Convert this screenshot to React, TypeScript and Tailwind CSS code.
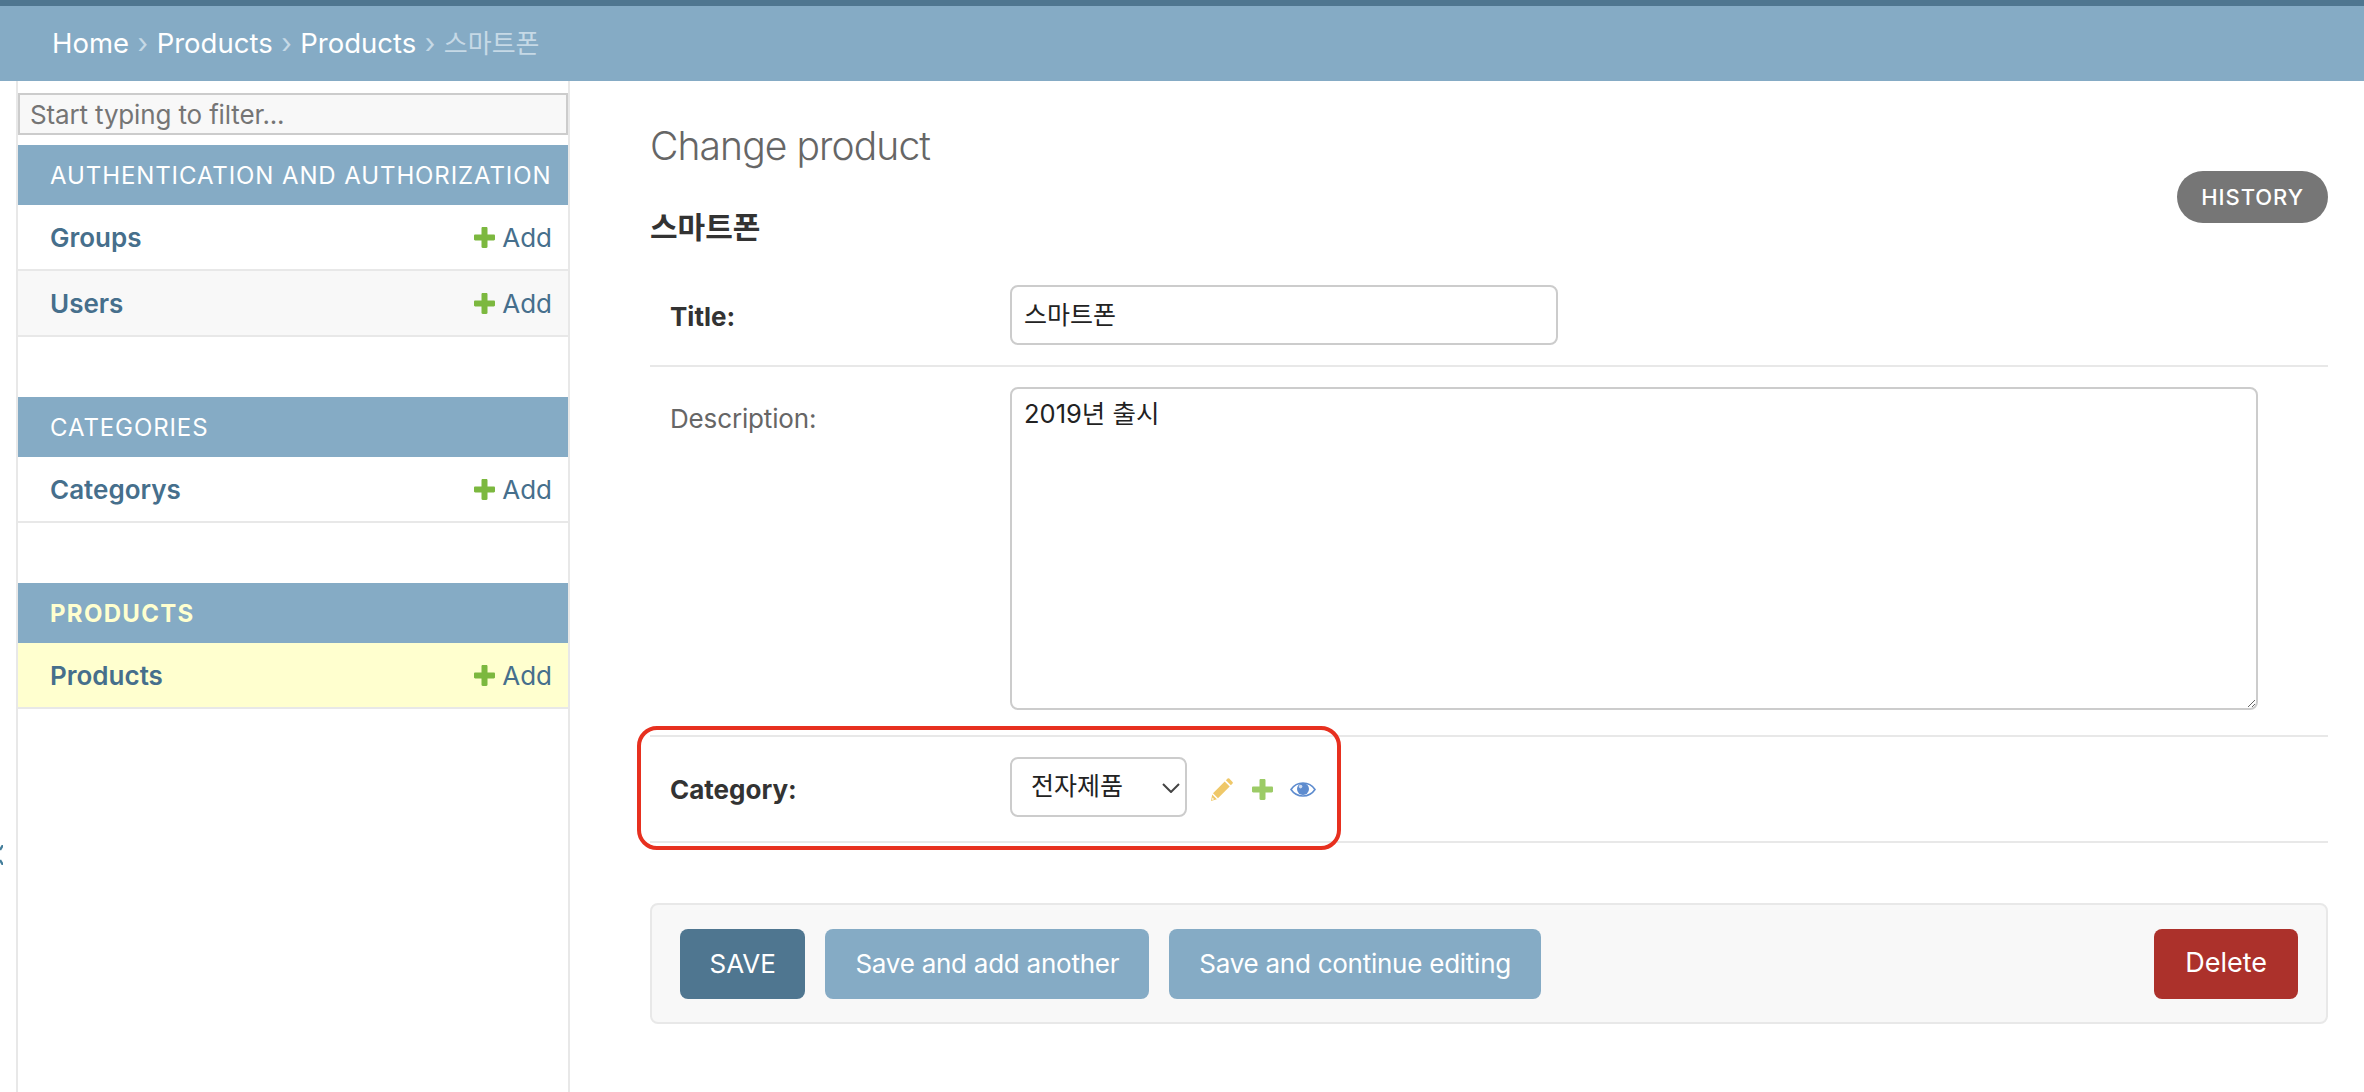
import React from "react";

const Plus = ({ className }: { className: string }) => (
  <svg viewBox="0 0 21 21" className={className} fill="currentColor" aria-hidden="true">
    <path d="M7.5 1.2c0-.7.5-1.2 1.2-1.2h3.6c.7 0 1.2.5 1.2 1.2v6.3h6.3c.7 0 1.2.5 1.2 1.2v3.6c0 .7-.5 1.2-1.2 1.2h-6.3v6.3c0 .7-.5 1.2-1.2 1.2H8.7c-.7 0-1.2-.5-1.2-1.2v-6.3H1.2C.5 13.5 0 13 0 12.3V8.7c0-.7.5-1.2 1.2-1.2h6.3z" />
  </svg>
);

const Pencil = () => (
  <svg viewBox="0 0 22 23" className="h-[23px] w-[22px] text-[#efc869]" fill="currentColor" aria-hidden="true">
    <path d="M16.6.6a1.2 1.2 0 0 1 1.7 0l3.2 3.3a1.2 1.2 0 0 1 0 1.7l-1.6 1.7-5-5zM13.7 3.5l5 5L7 20.2l-5-5zM1.2 16.4l4.7 4.8L0 23z" />
    <path d="M1.6 19.6l1.5 1.6-2.2.8z" fill="#fff" />
  </svg>
);

const Eye = () => (
  <svg viewBox="0 0 26 15" className="h-[15px] w-[26px] text-[#5e8ccf]" aria-hidden="true">
    <path d="M1 7.5C4 3 8.2 1 13 1s9 2 12 6.5C22 12 17.8 14 13 14S4 12 1 7.5z" fill="#fff" stroke="currentColor" strokeWidth="1.6" />
    <circle cx="13" cy="7" r="6" fill="currentColor" />
    <circle cx="10.6" cy="4.6" r="1.8" fill="#cfdcf0" />
  </svg>
);

type Model = { name: string; alt?: boolean; active?: boolean };

const Row = ({ name, alt, active }: Model) => (
  <div
    className={`flex h-[66px] items-center justify-between border-b-2 border-[#e8e8e8] pl-[32px] pr-[16px] ${
      active ? "bg-[#ffffcf]" : alt ? "bg-[#f8f8f8]" : "bg-white"
    }`}
  >
    <span className="text-[26px] font-semibold text-[#466f8c]">{name}</span>
    <span className="flex items-center gap-[7px] text-[26px] text-[#466f8c]">
      <Plus className="h-[21px] w-[21px] text-[#7cb83f]" />
      Add
    </span>
  </div>
);

const Section = ({ title, active, models }: { title: string; active?: boolean; models: Model[] }) => (
  <section className="mb-[60px]">
    <div
      className={`flex h-[60px] items-center pl-[32px] pt-[2px] text-[24px] uppercase ${
        active ? "bg-[#85abc5] font-bold tracking-[1.3px] text-[#ffffcf]" : "bg-[#85abc5] tracking-[0.9px] text-white"
      }`}
    >
      {title}
    </div>
    {models.map((m) => (
      <Row key={m.name} {...m} />
    ))}
  </section>
);

const Crumb = () => <span className="mx-[8.5px] text-[#c6d9e6]">›</span>;

const btn = "flex h-[70px] items-center rounded-[8px] text-[26px] text-white";

export default function App() {
  return (
    <div className="min-h-[1092px] bg-white font-['Inter','Noto_Sans_CJK_KR',sans-serif] text-[#333]">
      <header className="flex h-[81px] items-center border-t-[6px] border-[#4f7690] bg-[#85abc5] pl-[52px] text-[27.5px] text-white">
        <span>Home</span>
        <Crumb />
        <span>Products</span>
        <Crumb />
        <span>Products</span>
        <Crumb />
        <span className="text-[26px] text-[#c6d9e6]">스마트폰</span>
      </header>

      <div className="flex h-[1011px]">
        <div className="relative w-[16px] shrink-0">
          <svg viewBox="0 0 3 20" className="absolute left-0 top-[764px] h-[20px] w-[3px]" fill="none" stroke="#447e9b" strokeWidth="2.4" aria-hidden="true">
            <path d="M3 0L0 5M0 15l3 5" />
          </svg>
        </div>

        <aside className="w-[554px] shrink-0 border-x-2 border-[#e8e8e8] pt-[12px]">
          <input
            readOnly
            placeholder="Start typing to filter..."
            className="mb-[10px] block h-[42px] w-full border-2 border-[#ccc] bg-[#f8f8f8] px-[10px] text-[26px] tracking-[-0.15px] placeholder:text-[#757575]"
          />
          <Section
            title="Authentication and Authorization"
            models={[{ name: "Groups" }, { name: "Users", alt: true }]}
          />
          <Section title="Categories" models={[{ name: "Categorys" }]} />
          <Section title="Products" active models={[{ name: "Products", active: true }]} />
        </aside>

        <main className="flex-1 pl-[80px] pr-[36px]">
          <div className="flex justify-between">
            <div>
              <h1 className="mt-[40px] text-[39px] font-light leading-[50px] tracking-[-0.9px] text-[#666]">Change product</h1>
              <h2 className="mt-[36px] text-[30px] font-bold leading-[40px] text-[#333]">스마트폰</h2>
            </div>
            <a className="mt-[90px] flex h-[52px] items-center rounded-full bg-[#767676] px-[24px] text-[22px] font-medium uppercase tracking-[0.95px] text-white">
              History
            </a>
          </div>

          <div className="mt-[38px] flex h-[82px] items-start border-b-2 border-[#e8e8e8] pl-[20px]">
            <label className="mt-[14px] w-[340px] text-[26px] font-bold leading-[36px] text-[#333]">Title:</label>
            <input
              readOnly
              value="스마트폰"
              className="h-[60px] w-[548px] rounded-[8px] border-2 border-[#ccc] px-[12px] pb-[4px] text-[25px] text-[#222]"
            />
          </div>

          <div className="flex h-[370px] items-start border-b-2 border-[#e8e8e8] pl-[20px] pt-[20px]">
            <label className="mt-[14px] w-[340px] text-[26px] leading-[36px] tracking-[-0.15px] text-[#666]">Description:</label>
            <textarea
              readOnly
              defaultValue="2019년 출시"
              className="h-[323px] w-[1248px] rounded-[8px] border-2 border-[#ccc] px-[12px] py-[7px] text-[25.5px] leading-[36px] text-[#222]"
            />
          </div>

          <div className="relative flex h-[106px] items-center border-b-2 border-[#e8e8e8] pl-[20px]">
            <label className="w-[340px] text-[26px] font-bold text-[#333]">Category:</label>
            <div className="relative -mt-[4px] h-[60px] w-[177px]">
              <select className="h-full w-full appearance-none rounded-[8px] border-2 border-[#ccc] bg-white pl-[19px] text-[25px] text-[#222]">
                <option>전자제품</option>
              </select>
              <svg viewBox="0 0 18 10" className="pointer-events-none absolute right-[7px] top-[26px] h-[10px] w-[18px]" fill="none" stroke="#444" strokeWidth="2">
                <path d="M1 1l8 8 8-8" />
              </svg>
            </div>
            <div className="ml-[24px] flex items-center gap-[19px]">
              <Pencil />
              <Plus className="h-[21px] w-[21px] text-[#9ccb66]" />
              <div className="-ml-[2px]">
                <Eye />
              </div>
            </div>
            <div className="pointer-events-none absolute left-[-13px] top-[-11px] h-[124px] w-[704px] rounded-[20px] border-4 border-[#e7301f]" />
          </div>

          <div className="mt-[60px] flex h-[121px] items-center gap-[20px] rounded-[8px] border-2 border-[#e8e8e8] bg-[#f8f8f8] px-[28px]">
            <button className={`${btn} bg-[#4f7690] px-[29.5px] uppercase`}>Save</button>
            <button className={`${btn} bg-[#85abc5] px-[30px] tracking-[-0.25px]`}>Save and add another</button>
            <button className={`${btn} bg-[#85abc5] px-[30px] tracking-[-0.25px]`}>Save and continue editing</button>
            <button className={`${btn} ml-auto bg-[#ac312b] px-[31px] text-[27px]`}>Delete</button>
          </div>
        </main>
      </div>
    </div>
  );
}
